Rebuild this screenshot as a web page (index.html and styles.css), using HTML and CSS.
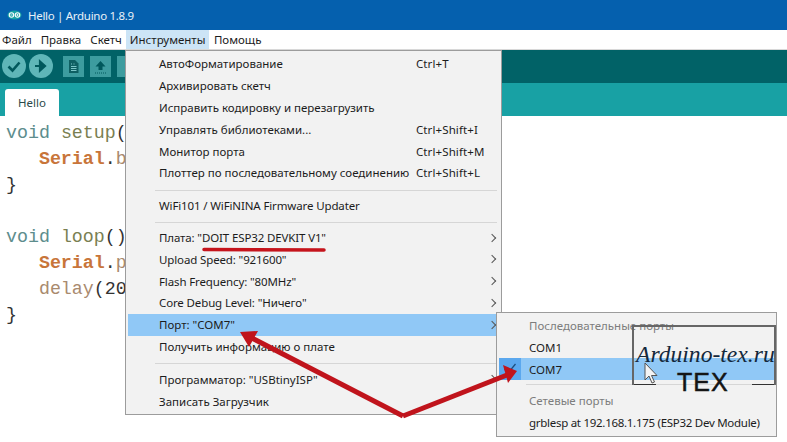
FILE: index.html
```html
<!DOCTYPE html>
<html lang="ru">
<head>
<meta charset="utf-8">
<title>Hello | Arduino 1.8.9</title>
<link rel="stylesheet" href="styles.css">
</head>
<body>
<div class="app">
  <header class="titlebar">
    <svg class="logo" viewBox="0 0 18 12" width="15" height="10"><ellipse cx="9" cy="6" rx="8.4" ry="5.4" fill="#17a1a5"/><circle cx="5.4" cy="6" r="2.7" fill="none" stroke="#fff" stroke-width="1.3"/><circle cx="12.6" cy="6" r="2.7" fill="none" stroke="#fff" stroke-width="1.3"/><path d="M4 6h2.8M11.2 6h2.8M12.6 4.7v2.6" stroke="#fff" stroke-width=".9"/></svg>
    <span class="title">Hello | Arduino 1.8.9</span>
  </header>
  <nav class="menubar">
    <span class="mi mi-first">Файл</span>
    <span class="mi">Правка</span>
    <span class="mi">Скетч</span>
    <span class="mi mi-open">Инструменты</span>
    <span class="mi">Помощь</span>
  </nav>
  <div class="toolbar">
    <span class="round"><svg viewBox="0 0 24 24" width="24" height="24"><path d="M6.500 12.500l4 4 7-8" fill="none" stroke="#00585c" stroke-width="2.600"/></svg></span>
    <span class="round"><svg viewBox="0 0 24 24" width="24" height="24"><path d="M6 12h8M11 7.500l5 4.500-5 4.500z" fill="#00585c" stroke="#00585c" stroke-width="2.200"/></svg></span>
    <span class="square sq-first"><svg viewBox="0 0 21 21" width="21" height="21"><path d="M6 4h6l3.500 3.500V17H6z" fill="#0e5f62"/><path d="M8 8h1M10.500 8h1M8 10.500h5.500M8 12.500h5.500M8 14.500h5.500" stroke="#7cc6c8" stroke-width="1"/></svg></span>
    <span class="square"><svg viewBox="0 0 21 21" width="21" height="21"><path d="M10.500 5l5 5.500h-3V14h-4v-3.500h-3z" fill="#00585c"/><path d="M5 17h11" stroke="#00585c" stroke-width="1" stroke-dasharray="1 1"/></svg></span>
    <span class="square"></span>
  </div>
  <div class="tabstrip"><span class="tab">Hello</span></div>
  <pre class="editor"><span class="kw">void</span> <span class="fn">setup</span>(
   <span class="cls">Serial</span>.<span class="mth">b</span>
}

<span class="kw">void</span> <span class="fn">loop</span>()
   <span class="cls">Serial</span>.<span class="mth">p</span>
   <span class="mth">delay</span>(20
}</pre>
</div>

<div class="menu tools">
  <div class="row"><span>АвтоФорматирование</span><span class="key">Ctrl+T</span></div>
  <div class="row"><span>Архивировать скетч</span></div>
  <div class="row"><span>Исправить кодировку и перезагрузить</span></div>
  <div class="row"><span>Управлять библиотеками...</span><span class="key">Ctrl+Shift+I</span></div>
  <div class="row"><span>Монитор порта</span><span class="key">Ctrl+Shift+M</span></div>
  <div class="row"><span>Плоттер по последовательному соединению</span><span class="key">Ctrl+Shift+L</span></div>
  <div class="sep sep-a"></div>
  <div class="row lat"><span>WiFi101 / WiFiNINA Firmware Updater</span></div>
  <div class="sep"></div>
  <div class="row lat"><span>Плата: "DOIT ESP32 DEVKIT V1"</span><i class="chev"></i></div>
  <div class="row lat"><span>Upload Speed: "921600"</span><i class="chev"></i></div>
  <div class="row lat"><span>Flash Frequency: "80MHz"</span><i class="chev"></i></div>
  <div class="row lat"><span>Core Debug Level: "Ничего"</span><i class="chev"></i></div>
  <div class="row hl"><span>Порт: "COM7"</span><i class="chev"></i></div>
  <div class="row"><span>Получить информацию о плате</span></div>
  <div class="sep sep-c"></div>
  <div class="row"><span>Программатор: "USBtinyISP"</span><i class="chev"></i></div>
  <div class="row"><span>Записать Загрузчик</span></div>
</div>

<div class="menu ports">
  <div class="prow muted">Последовательные порты</div>
  <div class="prow">COM1</div>
  <div class="prow phl"><span class="check"><svg viewBox="0 0 14 12" width="14" height="12"><path d="M1.500 6l3.500 4 7.500-9" fill="none" stroke="#1c4f80" stroke-width="1.300"/></svg></span>COM7</div>
  <div class="psep"></div>
  <div class="prow muted">Сетевые порты</div>
  <div class="prow tight">grblesp at 192.168.1.175 (ESP32 Dev Module)</div>
</div>

<div class="mark">
  <span class="mark-url">Arduino-tex.ru</span>
  <span class="mark-tex">TEX</span>
</div>

<svg class="annot" viewBox="0 0 787 442" width="787" height="442">
  <path d="M204 249.500L324 250" stroke="#c5141c" stroke-width="3.500" stroke-linecap="round"/>
  <path d="M403 416L250 337" stroke="#c0141c" stroke-width="5" fill="none"/>
  <path d="M240 332L258 331L249 347z" fill="#c0141c"/>
  <path d="M403 416L507 375" stroke="#c0141c" stroke-width="5" fill="none"/>
  <path d="M517 371L503 365L508 383z" fill="#c0141c"/>
  <path d="M645 363v17l4-4 3 7 2.500-1-3-6.500h5.500z" fill="#f4f4f4" stroke="#555" stroke-width="1"/>
</svg>
</body>
</html>
```

FILE: styles.css
```css
html, body {
  margin: 0;
  padding: 0;
  width: 787px;
  height: 442px;
  overflow: hidden;
  background: #fff;
  font-family: "Noto Sans", "Open Sans", sans-serif;
  color: #1c1c1c;
}

.app {
  display: flex;
  flex-direction: column;
  height: 442px;
}

.titlebar {
  flex: 0 0 30px;
  display: flex;
  align-items: center;
  gap: 6px;
  padding-left: 7px;
  background: #0560ae;
  color: #e8f1f8;
  font-size: 11.500px;
  letter-spacing: -0.3px;
}

.menubar {
  flex: 0 0 20px;
  display: flex;
  align-items: stretch;
  background: #fff;
  font-size: 11.500px;
  border-bottom: 1px solid #d8d8d8;
  box-sizing: border-box;
}

.mi {
  display: flex;
  align-items: center;
  padding: 0 4.500px;
}

.mi-first {
  margin-left: -2.500px;
}

.mi-open {
  background: #cce4f6;
  padding: 0 4px 0 3.500px;
}

.toolbar {
  flex: 0 0 33px;
  display: flex;
  align-items: center;
  padding: 0 0 1px 2px;
  box-sizing: border-box;
  background: #016267;
}

.round {
  width: 24px;
  height: 24px;
  border-radius: 50%;
  background: #5fb6b8;
  margin-right: 3px;
}

.square {
  width: 21px;
  height: 21px;
  background: #3d9c9f;
  margin-right: 6px;
}

.sq-first {
  margin-left: 7px;
}

.round svg, .square svg {
  display: block;
}

.tabstrip {
  flex: 0 0 33px;
  display: flex;
  align-items: flex-end;
  padding-left: 5px;
  background: #18a1a4;
  box-sizing: border-box;
}

.tab {
  width: 54px;
  height: 27px;
  display: flex;
  align-items: center;
  justify-content: center;
  background: #fff;
  border-radius: 3px 3px 0 0;
  font-size: 11.500px;
  color: #2b4a4a;
}

.editor {
  flex: 1;
  margin: 0;
  padding: 4px 0 0 6px;
  font-family: "Liberation Mono", monospace;
  font-size: 18.300px;
  line-height: 26px;
  color: #333;
  background: #fff;
}

.kw { color: #5d8d8d; }
.fn { color: #7a7f52; }
.cls { color: #c8753a; font-weight: bold; }
.mth { color: #a98a6e; }

.menu {
  position: absolute;
  box-sizing: border-box;
  background: #f2f2f2;
  border: 1px solid #9c9c9c;
  font-size: 11.500px;
}

.tools {
  left: 125px;
  top: 50px;
  width: 377px;
  height: 365px;
  padding: 2px 2px;
}

.row {
  height: 21.800px;
  display: flex;
  align-items: center;
  justify-content: space-between;
  padding: 0 84px 0 31px;
  position: relative;
}

.lat {
  letter-spacing: -0.130px;
}

.key {
  position: absolute;
  left: 288px;
  letter-spacing: 0.100px;
}

.hl {
  background: #90c8f6;
}

.sep {
  height: 1px;
  margin: 5px 2px 4px 27px;
  background: #d6d6d6;
}

.sep-a {
  margin-top: 6px;
}

.sep-c {
  margin-top: 6px;
}

.chev {
  position: absolute;
  right: 4px;
  top: 8px;
  width: 5px;
  height: 5px;
  border-top: 1px solid #555;
  border-right: 1px solid #555;
  transform: rotate(45deg);
}

.ports {
  left: 496px;
  top: 312px;
  width: 281px;
  height: 125px;
  padding: 1px 2px;
  z-index: 1;
}

.prow {
  height: 22px;
  display: flex;
  align-items: center;
  padding-left: 30px;
  position: relative;
}

.tight {
  letter-spacing: -0.280px;
}

.phl {
  background: #90c8f6;
}

.check {
  position: absolute;
  left: 0;
  top: 0;
  width: 22px;
  height: 22px;
  display: flex;
  align-items: center;
  justify-content: center;
  background: #5ba8ee;
}

.muted {
  color: #7d7d7d;
}

.psep {
  height: 1px;
  margin: 4px 2px 4px 27px;
  background: #d6d6d6;
}

.mark {
  position: absolute;
  left: 632px;
  top: 325px;
  width: 144px;
  height: 60px;
  box-sizing: border-box;
  border: 2px solid #666;
  border-bottom: 0;
  z-index: 2;
}

.mark::before, .mark::after {
  content: "";
  position: absolute;
  bottom: 0;
  height: 1.500px;
  background: #333;
  width: 22px;
}

.mark::before { left: 0; }
.mark::after { right: 0; }

.mark-url {
  position: absolute;
  left: 2px;
  top: 14px;
  font-family: "Liberation Serif", serif;
  font-style: italic;
  font-size: 23.600px;
  color: #14283c;
  white-space: nowrap;
}

.mark-tex {
  position: absolute;
  left: 43px;
  top: 41px;
  font-family: "Liberation Sans", sans-serif;
  font-size: 25px;
  line-height: 28px;
  letter-spacing: 1px;
  color: #151515;
  -webkit-text-stroke: 0.500px #151515;
}

.annot {
  position: absolute;
  left: 0;
  top: 0;
  z-index: 3;
  pointer-events: none;
}
```
